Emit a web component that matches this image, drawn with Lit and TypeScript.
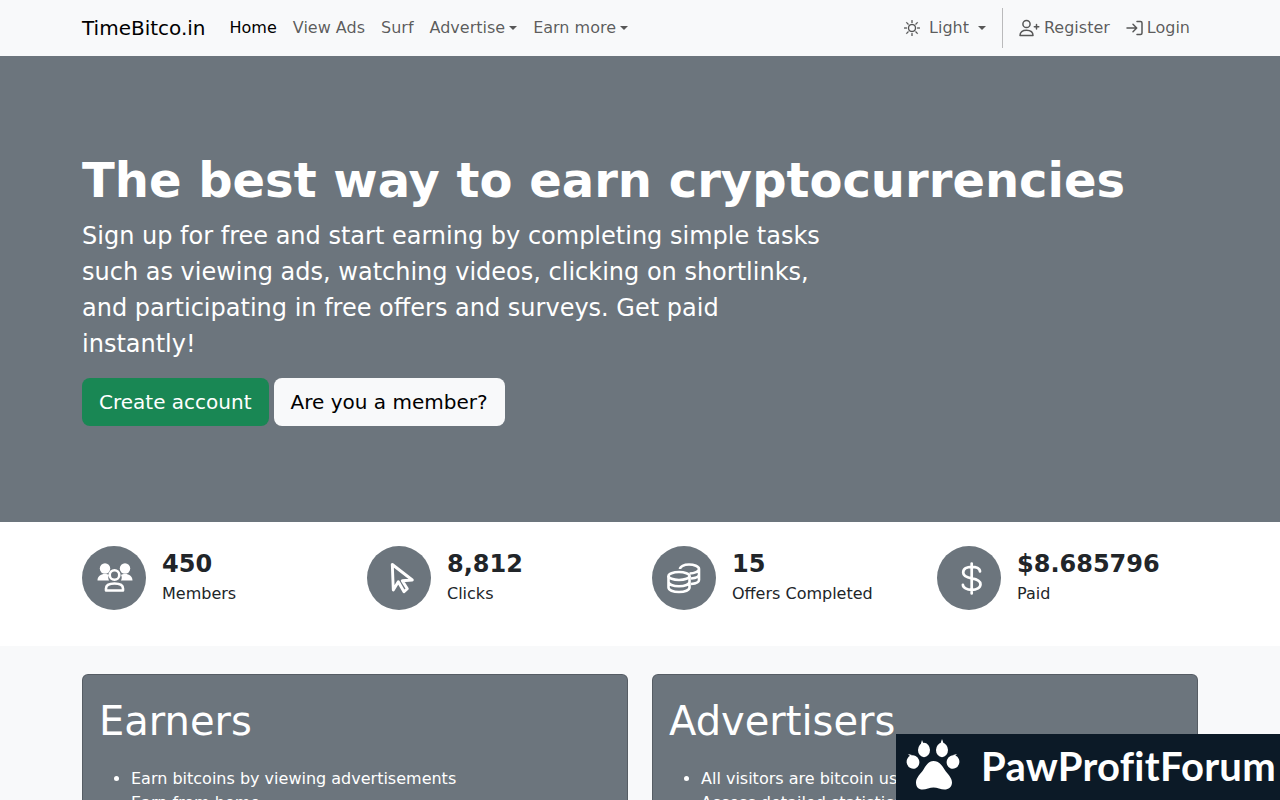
import { LitElement, css, html, svg } from "lit";
import { customElement } from "lit/decorators.js";

const sun = svg`<path d="M8 11a3 3 0 1 1 0-6 3 3 0 0 1 0 6m0 1a4 4 0 1 0 0-8 4 4 0 0 0 0 8M8 0a.5.5 0 0 1 .5.5v2a.5.5 0 0 1-1 0v-2A.5.5 0 0 1 8 0m0 13a.5.5 0 0 1 .5.5v2a.5.5 0 0 1-1 0v-2A.5.5 0 0 1 8 13m8-5a.5.5 0 0 1-.5.5h-2a.5.5 0 0 1 0-1h2a.5.5 0 0 1 .5.5M3 8a.5.5 0 0 1-.5.5h-2a.5.5 0 0 1 0-1h2A.5.5 0 0 1 3 8m10.657-5.657a.5.5 0 0 1 0 .707l-1.414 1.415a.5.5 0 1 1-.707-.708l1.414-1.414a.5.5 0 0 1 .707 0m-9.193 9.193a.5.5 0 0 1 0 .707L3.05 13.657a.5.5 0 0 1-.707-.707l1.414-1.414a.5.5 0 0 1 .707 0m9.193 2.121a.5.5 0 0 1-.707 0l-1.414-1.414a.5.5 0 0 1 .707-.707l1.414 1.414a.5.5 0 0 1 0 .707M4.464 4.465a.5.5 0 0 1-.707 0L2.343 3.05a.5.5 0 1 1 .707-.707l1.414 1.414a.5.5 0 0 1 0 .708"/>`;

const stats = [
  {
    value: "450",
    label: "Members",
    icon: svg`
      <circle cx="23" cy="22.500" r="5.200" fill="#fff" />
      <circle cx="43" cy="22.500" r="5.200" fill="#fff" />
      <path d="M15.500 34.500c0-4 3-6.500 7.500-6.500 1.700 0 3 .3 4 1-1 1.700-1 3.700 0 5.500zM50.500 34.500c0-4-3-6.500-7.500-6.500-1.700 0-3 .3-4 1 1 1.700 1 3.700 0 5.500z" fill="#fff" />
      <circle cx="32.500" cy="29" r="4.800" fill="none" stroke="#fff" stroke-width="2.600" />
      <path d="M24 44.500v-2c0-3.500 3-5 8.500-5s8.500 1.500 8.500 5v2z" fill="none" stroke="#fff" stroke-width="2.600" stroke-linejoin="round" />
    `,
  },
  {
    value: "8,812",
    label: "Clicks",
    icon: svg`<path d="M25.300 18.500 26.300 44l5-8.300L37 45.700l3.300-3-5-8 10-.700z" fill="none" stroke="#fff" stroke-width="2.900" stroke-linejoin="round" />`,
  },
  {
    value: "15",
    label: "Offers Completed",
    icon: svg`
      <g fill="none" stroke="#fff" stroke-width="2.600">
        <path d="M28 23c0-2.500 4-4.500 9-4.500s10 2 10 4.500-4.500 4.500-9.500 4.500M47 23v11c0 2-2.500 3.500-8 4M47 28.500c0 2-2.500 3.500-8 4" />
        <ellipse cx="27" cy="30" rx="10.500" ry="4" />
        <path d="M16.500 30v11.500c0 2.500 4.500 4.500 10.500 4.500s10.500-2 10.500-4.500V30M16.500 35.800c0 2.500 4.500 4.500 10.500 4.500s10.500-2 10.500-4.500" />
      </g>
    `,
  },
  {
    value: "$8.685796",
    label: "Paid",
    icon: svg`<path d="M34.700 17.500v30M43 25.500c0-3-3.800-4.700-8.300-4.700-4.800 0-8.500 2-8.500 5.700 0 3.500 3.700 5 8.500 5.800 5 .8 8.800 2.300 8.800 6 0 3.700-4 5.500-8.800 5.500s-8.800-2-8.800-5" fill="none" stroke="#fff" stroke-width="2.700" stroke-linecap="round" />`,
  },
];

const cards = [
  { title: "Earners", items: ["Earn bitcoins by viewing advertisements", "Earn from home"] },
  { title: "Advertisers", items: ["All visitors are bitcoin users", "Access detailed statistics"] },
];

@customElement("app-root")
export class AppRoot extends LitElement {
  static styles = css`
    :host {
      display: block;
      position: relative;
      height: 100vh;
      overflow: hidden;
      background: #f8f9fa;
      color: #212529;
      font-family: "DejaVu Sans", sans-serif;
      font-size: 16px;
      line-height: 1.5;
    }
    .container {
      width: 1116px;
      margin: 0 auto;
    }
    .navbar {
      height: 56px;
      background: #f8f9fa;
    }
    .navbar .container {
      display: flex;
      align-items: center;
      height: 100%;
    }
    .brand {
      font-size: 20px;
      color: #000;
      margin-right: 16px;
    }
    .nav-link {
      display: flex;
      align-items: center;
      padding: 8px;
      color: rgba(0, 0, 0, 0.65);
      white-space: nowrap;
    }
    .nav-link.active {
      color: #000;
    }
    .caret::after {
      content: "";
      display: inline-block;
      margin-left: 4px;
      border-top: 4.8px solid;
      border-right: 4.8px solid transparent;
      border-left: 4.8px solid transparent;
    }
    .spacer {
      flex: 1;
    }
    .theme svg {
      margin-right: 9px;
    }
    .theme.caret::after {
      margin-left: 9px;
    }
    .vr {
      width: 1px;
      height: 40px;
      margin: 0 8px;
      background: rgba(0, 0, 0, 0.25);
    }
    .nav-link svg {
      flex: none;
      display: block;
    }
    .account svg {
      margin-right: 4px;
    }
    .hero {
      background: #6c757d;
      color: #fff;
      padding: 96px 0;
    }
    .hero h1 {
      margin: 0 0 8px;
      font-size: 48px;
      line-height: 1.2;
      font-weight: 700;
    }
    .hero p {
      margin: 0 0 16px;
      width: 740px;
      font-size: 24px;
      line-height: 1.5;
    }
    .actions {
      display: flex;
      gap: 5.1px;
    }
    .btn {
      padding: 8px 16px;
      border: 1px solid transparent;
      border-radius: 8px;
      font-size: 20px;
      line-height: 1.5;
    }
    .btn.green {
      background: #198754;
      color: #fff;
    }
    .btn.light {
      background: #f8f9fa;
      color: #000;
      padding-right: 16.6px;
    }
    .stats {
      background: #fff;
      padding: 24px 0 36px;
    }
    .stats .container {
      display: grid;
      grid-template-columns: repeat(4, 285px);
    }
    .stat {
      display: flex;
      align-items: center;
      gap: 16px;
    }
    .disc {
      width: 64px;
      height: 64px;
      border-radius: 50%;
      background: #6c757d;
      flex: none;
    }
    .disc svg {
      display: block;
    }
    .stat-text {
      padding-top: 1px;
    }
    .value {
      font-size: 24px;
      line-height: 1.2;
      font-weight: 700;
      margin-bottom: 3px;
    }
    .cards {
      padding-top: 28px;
    }
    .cards .container {
      display: grid;
      grid-template-columns: 546px 546px;
      gap: 24px;
    }
    .card {
      background: #6c757d;
      color: #fff;
      border: 1px solid rgba(0, 0, 0, 0.2);
      border-radius: 6px;
      padding: 22px 16px 16px;
    }
    .card h1 {
      margin: 0 0 22px;
      font-size: 40px;
      line-height: 1.2;
      font-weight: 400;
    }
    .card ul {
      margin: 0;
      padding-left: 32px;
    }
    .promo {
      position: absolute;
      right: 0;
      bottom: 0;
      width: 384px;
      height: 66px;
      background: #0c1a27;
      color: #fff;
      display: flex;
      align-items: center;
      font-family: Lato, sans-serif;
      font-weight: 700;
      font-size: 40px;
      line-height: 1;
      letter-spacing: 0.24px;
    }
    .promo svg {
      display: block;
      margin: 0 20px 0 9px;
      flex: none;
    }
    .promo span {
      padding-bottom: 3px;
    }
  `;

  render() {
    return html`
      <nav class="navbar">
        <div class="container">
          <span class="brand">TimeBitco.in</span>
          <span class="nav-link active">Home</span>
          <span class="nav-link">View Ads</span>
          <span class="nav-link">Surf</span>
          <span class="nav-link caret">Advertise</span>
          <span class="nav-link caret">Earn more</span>
          <span class="spacer"></span>
          <span class="nav-link caret theme">
            <svg width="16" height="16" viewBox="0 0 16 16" fill="currentColor" stroke="currentColor" stroke-width="0.25">${sun}</svg>
            Light
          </span>
          <span class="vr"></span>
          <span class="nav-link account">
            <svg width="21" height="18" viewBox="0 0 21 18" fill="none" stroke="currentColor" stroke-width="1.500" stroke-linecap="round">
              <circle cx="7.500" cy="5" r="3.600" />
              <path d="M1 16.500c0-3.500 2.500-5.300 6.500-5.300s6.500 1.800 6.500 5.300z" stroke-linejoin="round" />
              <path d="M17.500 5.500v4.500M15.300 7.700h4.500" />
            </svg>
            Register
          </span>
          <span class="nav-link account">
            <svg width="17" height="16" viewBox="0 0 17 16" fill="none" stroke="currentColor" stroke-width="1.500" stroke-linecap="round" stroke-linejoin="round">
              <path d="M1 8h9.500M7 4.300 10.700 8 7 11.700M11 1.500h3.500c1 0 1.500.5 1.500 1.500v10c0 1-.5 1.500-1.500 1.500H11" />
            </svg>
            Login
          </span>
        </div>
      </nav>

      <section class="hero">
        <div class="container">
          <h1>The best way to earn cryptocurrencies</h1>
          <p>
            Sign up for free and start earning by completing simple tasks such
            as viewing ads, watching videos, clicking on shortlinks, and
            participating in free offers and surveys. Get paid instantly!
          </p>
          <div class="actions">
            <span class="btn green">Create account</span>
            <span class="btn light">Are you a member?</span>
          </div>
        </div>
      </section>

      <section class="stats">
        <div class="container">
          ${stats.map(
            (s) => html`
              <div class="stat">
                <div class="disc">
                  <svg width="64" height="64" viewBox="0 0 64 64">${s.icon}</svg>
                </div>
                <div class="stat-text">
                  <div class="value">${s.value}</div>
                  <div>${s.label}</div>
                </div>
              </div>
            `,
          )}
        </div>
      </section>

      <section class="cards">
        <div class="container">
          ${cards.map(
            (c) => html`
              <div class="card">
                <h1>${c.title}</h1>
                <ul>
                  ${c.items.map((i) => html`<li>${i}</li>`)}
                </ul>
              </div>
            `,
          )}
        </div>
      </section>

      <div class="promo">
        <svg width="56" height="60" viewBox="0 0 56 60" fill="#fff">
          <ellipse cx="8" cy="25" rx="6.300" ry="6.800" transform="rotate(-20 8 25)" />
          <ellipse cx="19" cy="13" rx="6" ry="7.200" />
          <ellipse cx="37" cy="13" rx="6" ry="7.200" />
          <ellipse cx="48" cy="25" rx="6.300" ry="6.800" transform="rotate(20 48 25)" />
          <path d="M3 17 5.500 19.500 7 18zM17 3l-1.500 5h3.500zM37 2l-1.700 5h3.500zM52 17l-2.500 2.500-1.500-1.500z" />
          <path d="M28.500 24c5 0 8 3.500 11 8.500 3 4.500 7.500 8 7.500 13 0 4.500-3.500 7-7.500 7-3.500 0-7.500-2-11-2s-7.500 2-11 2c-4 0-6.500-2.500-6.500-7 0-5 4.500-8.500 7.500-13 3-5 5.500-8.500 10-8.500z" />
        </svg>
        <span>PawProfitForum</span>
      </div>
    `;
  }
}
